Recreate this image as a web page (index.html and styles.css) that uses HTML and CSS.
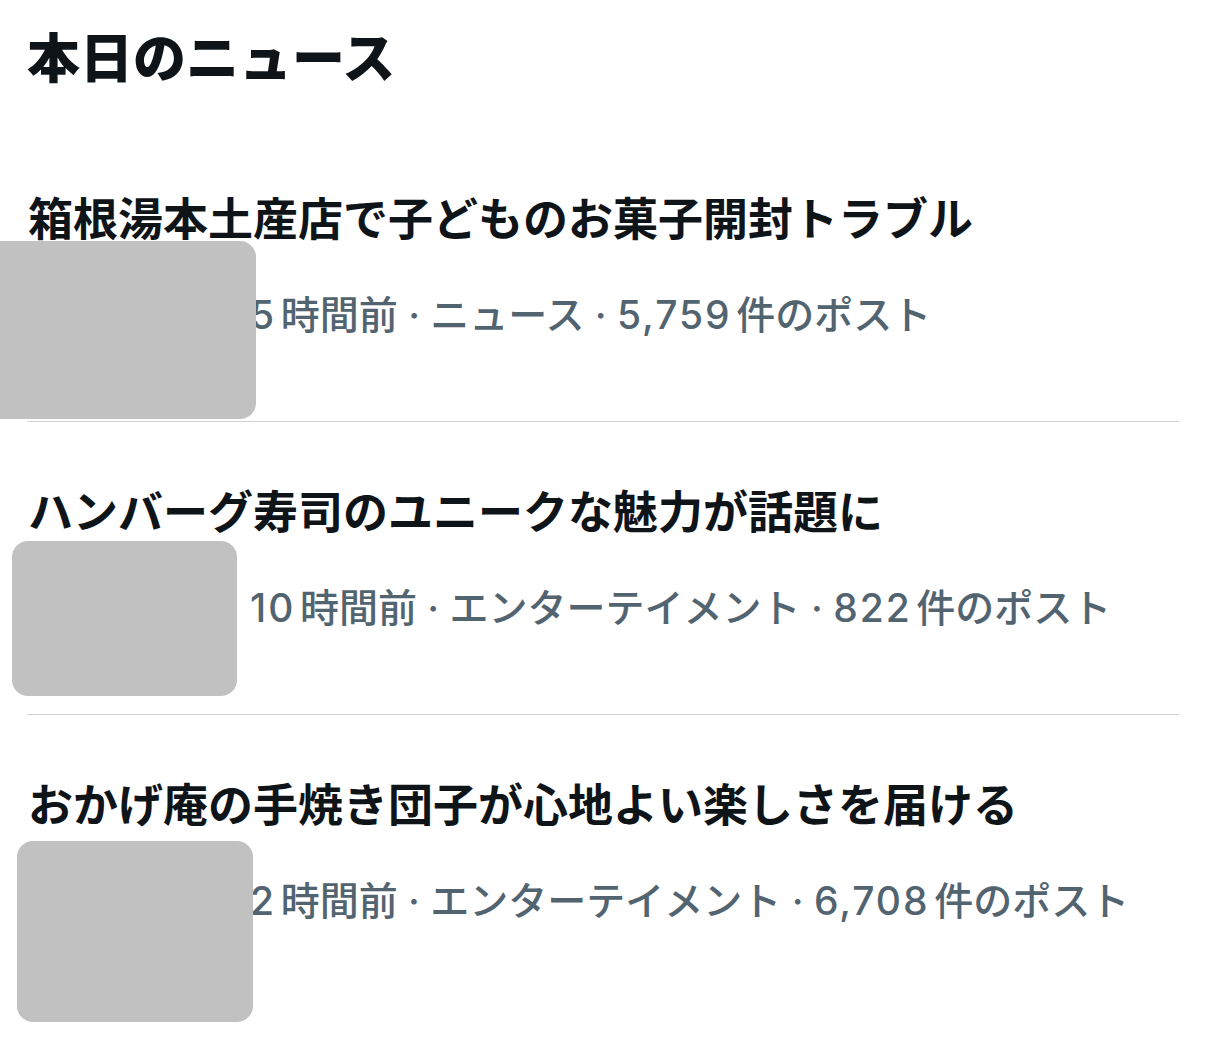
FILE: index.html
```html
<!DOCTYPE html>
<html lang="ja">
<head>
<meta charset="utf-8">
<title>本日のニュース</title>
<link rel="stylesheet" href="styles.css">
</head>
<body>
<main class="page">
  <h1 class="heading">本日のニュース</h1>
  <ul class="news-list">
    <li class="news-item">
      <div class="news-title">箱根湯本土産店で子どものお菓子開封トラブル</div>
      <div class="news-meta"><span class="num">5</span>時間前 · ニュース · <span class="num">5,759</span>件のポスト</div>
      <div class="mask mask-1"></div>
    </li>
    <li class="news-item">
      <div class="news-title">ハンバーグ寿司のユニークな魅力が話題に</div>
      <div class="news-meta"><span class="num">10</span>時間前 · エンターテイメント · <span class="num">822</span>件のポスト</div>
      <div class="mask mask-2"></div>
    </li>
    <li class="news-item">
      <div class="news-title">おかげ庵の手焼き団子が心地よい楽しさを届ける</div>
      <div class="news-meta"><span class="num">2</span>時間前 · エンターテイメント · <span class="num">6,708</span>件のポスト</div>
      <div class="mask mask-3"></div>
    </li>
  </ul>
</main>
</body>
</html>
```

FILE: styles.css
```css
* { box-sizing: border-box; }

html, body {
  margin: 0;
  padding: 0;
  background: #ffffff;
}

body {
  font-family: "Noto Sans CJK JP", "Noto Sans", sans-serif;
  color: #0f1419;
}

.page {
  padding: 0 27px 40px;
}

.heading {
  margin: 20px 0 0;
  font-size: 53px;
  line-height: 70px;
  font-weight: 800;
  letter-spacing: 0;
}

.news-list {
  list-style: none;
  margin: 39px 0 0;
  padding: 0;
}

.news-item {
  position: relative;
  padding: 59px 0 0;
  height: 293px;
  border-bottom: 1px solid #cfd3d6;
}

.news-item:last-child {
  border-bottom: none;
}

.news-title {
  padding-left: 1px;
  font-size: 45px;
  line-height: 58px;
  font-weight: 700;
  white-space: nowrap;
}

.news-meta {
  margin-top: 44px;
  padding-left: 223px;
  font-family: "Inter", "Noto Sans CJK JP", sans-serif;
  font-size: 39px;
  line-height: 50px;
  font-weight: 500;
  color: #536471;
  white-space: nowrap;
}

.num {
  letter-spacing: 0.05em;
  margin-right: 0.12em;
}

.mask {
  position: absolute;
  background: #c1c1c1;
  border-radius: 16px;
}

.mask-1 {
  left: -43px;
  top: 112px;
  width: 272px;
  height: 178px;
}

.mask-2 {
  left: -15px;
  top: 119px;
  width: 225px;
  height: 155px;
}

.mask-3 {
  left: -10px;
  top: 126px;
  width: 236px;
  height: 181px;
}
```
